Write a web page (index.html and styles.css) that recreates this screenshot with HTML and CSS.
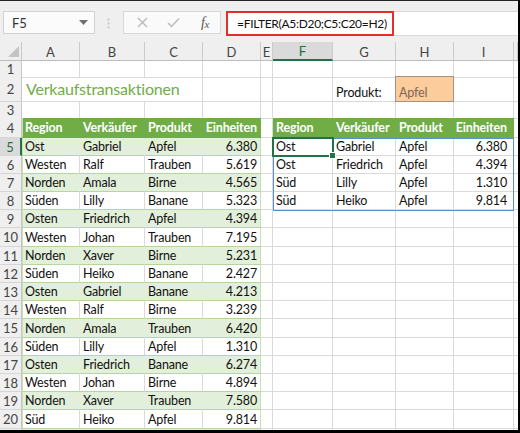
FILE: index.html
```html
<!DOCTYPE html>
<html lang="de">
<head>
<meta charset="utf-8">
<title>FILTER</title>
<link rel="stylesheet" href="styles.css">
</head>
<body>
<div class="frame">
  <div class="toolbar">
    <div class="namebox"><span>F5</span><svg class="dd" width="9" height="5" viewBox="0 0 9 5"><polygon points="0,0 9,0 4.5,5" fill="#707070"/></svg></div>
    <svg class="grip" width="3" height="11" viewBox="0 0 3 11"><circle cx="1.5" cy="1.5" r="1.1"/><circle cx="1.5" cy="5.5" r="1.1"/><circle cx="1.5" cy="9.5" r="1.1"/></svg>
    <div class="btns">
      <svg class="bx" width="11" height="11" viewBox="0 0 11 11"><path d="M1 1L10 10M10 1L1 10" stroke="#b9b9b9" stroke-width="1.4" fill="none"/></svg>
      <svg class="bok" width="13" height="11" viewBox="0 0 13 11"><path d="M1 6L4.5 9.5L12 1.5" stroke="#b9b9b9" stroke-width="1.4" fill="none"/></svg>
      <span class="fx">f<span class="fxsub">x</span></span>
    </div>
    <div class="formula"><span class="ftext">=FILTER(A5:D20;C5:C20=H2)</span></div>
  </div>

  <div class="sheet">
    <div class="row head">
      <div class="corner"><svg width="11" height="11" viewBox="0 0 11 11"><polygon points="11,0 11,11 0,11" fill="#c4c4c4"/></svg></div>
      <div class="ch">A</div><div class="ch">B</div><div class="ch">C</div><div class="ch">D</div><div class="ch">E</div>
      <div class="ch selh">F</div><div class="ch">G</div><div class="ch">H</div><div class="ch">I</div><div class="ch"></div>
    </div>

    <div class="row h16">
      <div class="rh">1</div><div class="c"></div><div class="c"></div><div class="c"></div><div class="c"></div><div class="c"></div><div class="c"></div><div class="c"></div><div class="c"></div><div class="c"></div><div class="c"></div>
    </div>
    <div class="row h25">
      <div class="rh">2</div><div class="c title span3">Verkaufstransaktionen</div><div class="c"></div><div class="c"></div><div class="c"></div><div class="c">Produkt:</div><div class="c input">Apfel</div><div class="c"></div><div class="c"></div>
    </div>
    <div class="row h16">
      <div class="rh">3</div><div class="c"></div><div class="c"></div><div class="c"></div><div class="c"></div><div class="c"></div><div class="c"></div><div class="c"></div><div class="c"></div><div class="c"></div><div class="c"></div>
    </div>
    <div class="row h20">
      <div class="rh">4</div>
      <div class="c th tl">Region</div><div class="c th">Verkäufer</div><div class="c th">Produkt</div><div class="c th num">Einheiten</div>
      <div class="c"></div>
      <div class="c th">Region</div><div class="c th">Verkäufer</div><div class="c th">Produkt</div><div class="c th num rnum">Einheiten</div>
      <div class="c"></div>
    </div>
    <div class="row h18">
      <div class="rh selr">5</div>
      <div class="c g tl">Ost</div><div class="c g">Gabriel</div><div class="c g">Apfel</div><div class="c g num tr">6.380</div>
      <div class="c"></div>
      <div class="c">Ost</div><div class="c">Gabriel</div><div class="c">Apfel</div><div class="c num rnum">6.380</div>
      <div class="c"></div>
    </div>
    <div class="row h18">
      <div class="rh">6</div>
      <div class="c w tl">Westen</div><div class="c w">Ralf</div><div class="c w">Trauben</div><div class="c w num tr">5.619</div>
      <div class="c"></div>
      <div class="c">Ost</div><div class="c">Friedrich</div><div class="c">Apfel</div><div class="c num rnum">4.394</div>
      <div class="c"></div>
    </div>
    <div class="row h18">
      <div class="rh">7</div>
      <div class="c g tl">Norden</div><div class="c g">Amala</div><div class="c g">Birne</div><div class="c g num tr">4.565</div>
      <div class="c"></div>
      <div class="c">Süd</div><div class="c">Lilly</div><div class="c">Apfel</div><div class="c num rnum">1.310</div>
      <div class="c"></div>
    </div>
    <div class="row h18">
      <div class="rh">8</div>
      <div class="c w tl">Süden</div><div class="c w">Lilly</div><div class="c w">Banane</div><div class="c w num tr">5.323</div>
      <div class="c"></div>
      <div class="c">Süd</div><div class="c">Heiko</div><div class="c">Apfel</div><div class="c num rnum">9.814</div>
      <div class="c"></div>
    </div>
    <div class="row h18">
      <div class="rh">9</div>
      <div class="c g tl">Osten</div><div class="c g">Friedrich</div><div class="c g">Apfel</div><div class="c g num tr">4.394</div>
      <div class="c"></div><div class="c"></div><div class="c"></div><div class="c"></div><div class="c"></div><div class="c"></div>
    </div>
    <div class="row h19">
      <div class="rh">10</div>
      <div class="c w tl">Westen</div><div class="c w">Johan</div><div class="c w">Trauben</div><div class="c w num tr">7.195</div>
      <div class="c"></div><div class="c"></div><div class="c"></div><div class="c"></div><div class="c"></div><div class="c"></div>
    </div>
    <div class="row h18">
      <div class="rh">11</div>
      <div class="c g tl">Norden</div><div class="c g">Xaver</div><div class="c g">Birne</div><div class="c g num tr">5.231</div>
      <div class="c"></div><div class="c"></div><div class="c"></div><div class="c"></div><div class="c"></div><div class="c"></div>
    </div>
    <div class="row h18">
      <div class="rh">12</div>
      <div class="c w tl">Süden</div><div class="c w">Heiko</div><div class="c w">Banane</div><div class="c w num tr">2.427</div>
      <div class="c"></div><div class="c"></div><div class="c"></div><div class="c"></div><div class="c"></div><div class="c"></div>
    </div>
    <div class="row h18">
      <div class="rh">13</div>
      <div class="c g tl">Osten</div><div class="c g">Gabriel</div><div class="c g">Banane</div><div class="c g num tr">4.213</div>
      <div class="c"></div><div class="c"></div><div class="c"></div><div class="c"></div><div class="c"></div><div class="c"></div>
    </div>
    <div class="row h18">
      <div class="rh">14</div>
      <div class="c w tl">Westen</div><div class="c w">Ralf</div><div class="c w">Birne</div><div class="c w num tr">3.239</div>
      <div class="c"></div><div class="c"></div><div class="c"></div><div class="c"></div><div class="c"></div><div class="c"></div>
    </div>
    <div class="row h19">
      <div class="rh">15</div>
      <div class="c g tl">Norden</div><div class="c g">Amala</div><div class="c g">Trauben</div><div class="c g num tr">6.420</div>
      <div class="c"></div><div class="c"></div><div class="c"></div><div class="c"></div><div class="c"></div><div class="c"></div>
    </div>
    <div class="row h18">
      <div class="rh">16</div>
      <div class="c w tl">Süden</div><div class="c w">Lilly</div><div class="c w">Apfel</div><div class="c w num tr">1.310</div>
      <div class="c"></div><div class="c"></div><div class="c"></div><div class="c"></div><div class="c"></div><div class="c"></div>
    </div>
    <div class="row h18">
      <div class="rh">17</div>
      <div class="c g tl">Osten</div><div class="c g">Friedrich</div><div class="c g">Banane</div><div class="c g num tr">6.274</div>
      <div class="c"></div><div class="c"></div><div class="c"></div><div class="c"></div><div class="c"></div><div class="c"></div>
    </div>
    <div class="row h18">
      <div class="rh">18</div>
      <div class="c w tl">Westen</div><div class="c w">Johan</div><div class="c w">Birne</div><div class="c w num tr">4.894</div>
      <div class="c"></div><div class="c"></div><div class="c"></div><div class="c"></div><div class="c"></div><div class="c"></div>
    </div>
    <div class="row h18">
      <div class="rh">19</div>
      <div class="c g tl">Norden</div><div class="c g">Xaver</div><div class="c g">Trauben</div><div class="c g num tr">7.580</div>
      <div class="c"></div><div class="c"></div><div class="c"></div><div class="c"></div><div class="c"></div><div class="c"></div>
    </div>
    <div class="row h19">
      <div class="rh">20</div>
      <div class="c w tl">Süd</div><div class="c w">Heiko</div><div class="c w">Apfel</div><div class="c w num tr">9.814</div>
      <div class="c"></div><div class="c"></div><div class="c"></div><div class="c"></div><div class="c"></div><div class="c"></div>
    </div>
    <div class="row h18">
      <div class="rh"></div>
      <div class="c g tl"></div><div class="c g"></div><div class="c g"></div><div class="c g tr"></div>
      <div class="c"></div><div class="c"></div><div class="c"></div><div class="c"></div><div class="c"></div><div class="c"></div>
    </div>

    <div class="spill"></div>
    <div class="selbox"><div class="handle"></div></div>
  </div>
</div>
</body>
</html>
```

FILE: styles.css
```css
html, body {
  margin: 0;
  padding: 0;
  background: #fff;
}

.frame {
  width: 518px;
  height: 429px;
  border-top: 1px solid #222;
  border-right: 2px solid #000;
  border-bottom: 3px solid #000;
  overflow: hidden;
  background: #fff;
  font-family: Lato, "Open Sans", sans-serif;
  color: #111;
}

/* ---------- toolbar ---------- */
.toolbar {
  height: 41px;
  background: #efefef;
  display: flex;
  align-items: flex-start;
  padding-left: 3px;
  box-sizing: border-box;
}

.namebox {
  margin-top: 10px;
  width: 92px;
  height: 23px;
  box-sizing: border-box;
  border: 1px solid #d2d2d2;
  background: #fbfbfb;
  display: flex;
  align-items: center;
  justify-content: space-between;
  padding: 0 6px 0 8px;
  font-size: 13px;
  color: #333;
}

.grip {
  margin-left: 12px;
  margin-top: 17px;
  fill: #c2c2c2;
}

.btns {
  margin-left: 13px;
  margin-top: 10px;
  width: 98px;
  height: 23px;
  box-sizing: border-box;
  border: 1px solid #d8d8d8;
  background: #fafafa;
  display: flex;
  align-items: center;
  padding-left: 13px;
}

.bok {
  margin-left: 19px;
}

.fx {
  margin-left: 21px;
  font-family: "Liberation Serif", "DejaVu Serif", serif;
  font-style: italic;
  font-size: 14px;
  color: #555;
  letter-spacing: -0.5px;
}

.fxsub {
  font-size: 11px;
  position: relative;
  top: 1px;
}

.formula {
  margin-left: 5px;
  margin-top: 10px;
  flex: 1;
  height: 25px;
  box-sizing: border-box;
  background: #fff;
  border: 1px solid #d8d8d8;
  border-right: none;
  display: flex;
}

.ftext {
  display: flex;
  align-items: center;
  box-sizing: border-box;
  width: 168px;
  height: 25px;
  margin: -1px 0 0 -1px;
  border: 2px solid #e0302c;
  padding-left: 9px;
  font-size: 12px;
  letter-spacing: -0.3px;
  color: #111;
  white-space: nowrap;
}

/* ---------- sheet ---------- */
.sheet {
  position: relative;
}

.row {
  display: grid;
  grid-template-columns: 22px 58px 65px 58px 58px 12px 60px 63px 58px 60px 1fr;
}

.head { height: 19px; }
.h16 { height: 16px; }
.h18 { height: 18px; }
.h19 { height: 19px; }
.h20 { height: 20px; }
.h25 { height: 25px; }

.corner {
  background: #efefef;
  border-right: 1px solid #c6c6c6;
  border-bottom: 1px solid #bdbdbd;
  display: flex;
  align-items: flex-end;
  justify-content: flex-end;
  padding: 0 2px 3px 0;
}

.ch {
  background: #efefef;
  border-right: 1px solid #cacaca;
  border-bottom: 1px solid #bdbdbd;
  display: flex;
  align-items: center;
  justify-content: center;
  font-size: 13px;
  color: #444;
  box-sizing: border-box;
  padding-top: 1px;
}

.ch.selh {
  background: #dadada;
  border-bottom: 2px solid #217346;
  color: #217346;
}

.rh {
  background: #efefef;
  border-right: 1px solid #c6c6c6;
  border-bottom: 1px solid #d6d6d6;
  display: flex;
  align-items: center;
  justify-content: center;
  font-size: 13px;
  color: #444;
  box-sizing: border-box;
}

.rh.selr {
  background: #dadada;
  border-right: 2px solid #217346;
  color: #217346;
}

.c {
  border-right: 1px solid #dadada;
  border-bottom: 1px solid #dadada;
  box-sizing: border-box;
  display: flex;
  align-items: flex-end;
  padding: 0 3px 1px 3px;
  font-size: 12.5px;
  letter-spacing: -0.15px;
  white-space: nowrap;
  overflow: visible;
  min-width: 0;
}

.num {
  justify-content: flex-end;
}

.rnum {
  padding-right: 6px;
}

.span3 {
  grid-column: span 3;
}

.title {
  font-size: 16px;
  font-weight: 400;
  letter-spacing: -0.2px;
  color: #70ad47;
  padding-left: 4px;
  padding-bottom: 3px;
}

.input {
  background: #fccc9c;
  border: 1px solid #a4917f;
  color: #7b6757;
  margin-left: -1px;
  margin-top: -1px;
  padding-left: 3px;
}

.th {
  background: #70ad47;
  border-right-color: #70ad47;
  border-bottom-color: #70ad47;
  color: #fff;
  font-weight: 700;
  padding-bottom: 2px;
}

.g {
  background: #e2efda;
  border-right-color: #e2efda;
  border-bottom-color: #b5d79e;
}

.w {
  background: #fff;
  border-bottom-color: #b5d79e;
}

.tl {
  box-shadow: inset 1px 0 0 #c6e0b4;
}

.tr {
  border-right-color: #c6e0b4;
}

/* overlays: spill range border and active cell */
.spill {
  position: absolute;
  left: 273px;
  top: 96px;
  width: 241px;
  height: 73px;
  box-sizing: border-box;
  border: 1px solid #5b8fd0;
  pointer-events: none;
}

.selbox {
  position: absolute;
  left: 272px;
  top: 95px;
  width: 62px;
  height: 20px;
  box-sizing: border-box;
  border: 2px solid #217346;
  pointer-events: none;
}

.handle {
  position: absolute;
  right: -4px;
  bottom: -4px;
  width: 5px;
  height: 5px;
  background: #217346;
  border: 1px solid #fff;
}
```
